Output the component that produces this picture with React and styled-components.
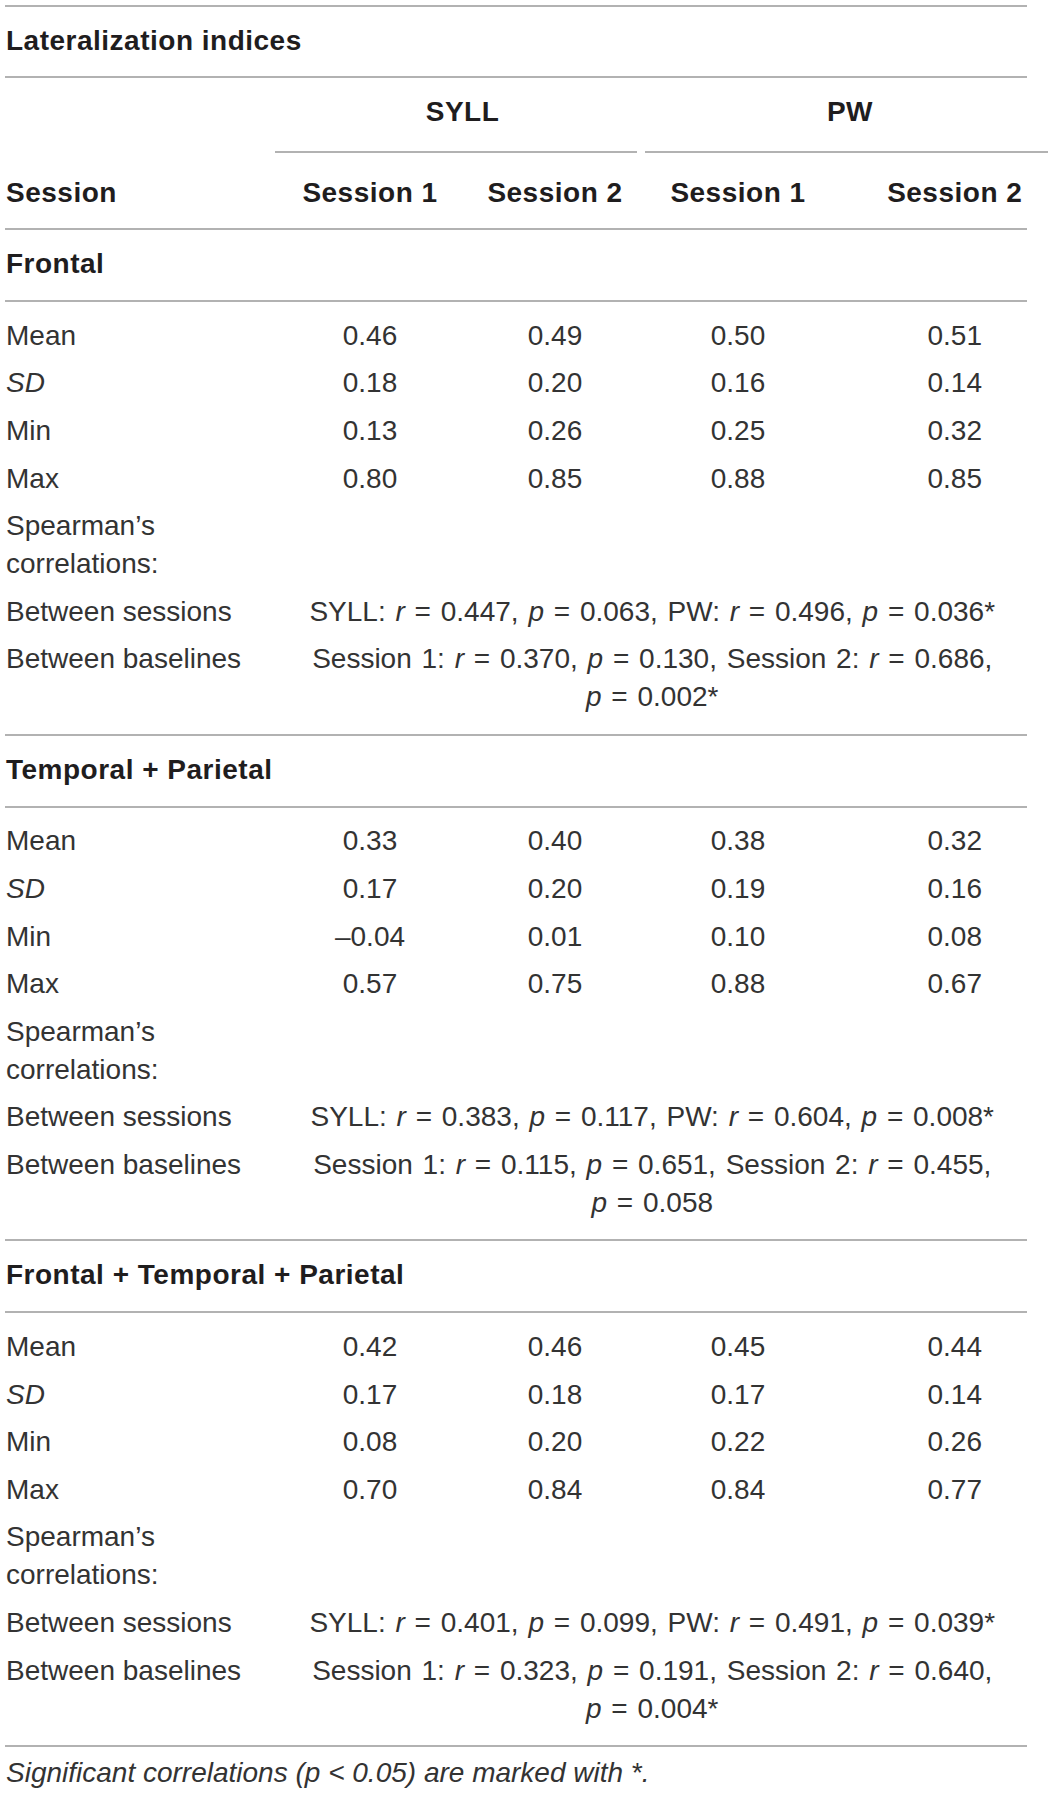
import React from 'react';
import styled, { createGlobalStyle } from 'styled-components';

const GlobalStyle = createGlobalStyle`
  html, body {
    margin: 0;
    padding: 0;
    background: #fff;
  }
  body {
    font-family: "Liberation Sans", Arial, sans-serif;
    font-size: 28px;
    line-height: 38px;
    color: #333;
  }
`;

const rule = '2px solid #b2b2b2';
const cols = '272.5px 185px 185px 181px 1fr';

const sections = [
  {
    name: 'Frontal',
    stats: [
      ['Mean', ['0.46', '0.49', '0.50', '0.51']],
      ['SD', ['0.18', '0.20', '0.16', '0.14'], true],
      ['Min', ['0.13', '0.26', '0.25', '0.32']],
      ['Max', ['0.80', '0.85', '0.88', '0.85']],
    ],
    sessions: ['0.447', '0.063', '0.496', '0.036*'],
    baselines: ['0.370', '0.130', '0.686', '0.002*'],
  },
  {
    name: 'Temporal + Parietal',
    stats: [
      ['Mean', ['0.33', '0.40', '0.38', '0.32']],
      ['SD', ['0.17', '0.20', '0.19', '0.16'], true],
      ['Min', ['–0.04', '0.01', '0.10', '0.08']],
      ['Max', ['0.57', '0.75', '0.88', '0.67']],
    ],
    sessions: ['0.383', '0.117', '0.604', '0.008*'],
    baselines: ['0.115', '0.651', '0.455', '0.058'],
  },
  {
    name: 'Frontal + Temporal + Parietal',
    stats: [
      ['Mean', ['0.42', '0.46', '0.45', '0.44']],
      ['SD', ['0.17', '0.18', '0.17', '0.14'], true],
      ['Min', ['0.08', '0.20', '0.22', '0.26']],
      ['Max', ['0.70', '0.84', '0.84', '0.77']],
    ],
    sessions: ['0.401', '0.099', '0.491', '0.039*'],
    baselines: ['0.323', '0.191', '0.640', '0.004*'],
  },
];

// one "r = x" / "p = x" pair, kept on a single line
function Stat({ sym, val }) {
  return (
    <Pair>
      <I>{sym}</I> = {val}
    </Pair>
  );
}

export default function App() {
  return (
    <>
      <GlobalStyle />
      <Page>
        <Table>
          <TitleRow>Lateralization indices</TitleRow>

          <GroupRow>
            <GroupHead $span='2 / 4' $inset='0 10.5px 0 -2.5px' $pad='13px'>
              SYLL
            </GroupHead>
            <GroupHead $span='4 / 6' $inset='0 -21px 0 -2.5px' $pad='7px'>
              PW
            </GroupHead>
          </GroupRow>

          <HeadRow>
            <Label>Session</Label>
            <Value>Session 1</Value>
            <Value>Session 2</Value>
            <Value>Session 1</Value>
            <Value>Session 2</Value>
          </HeadRow>

          {sections.map((s) => (
            <React.Fragment key={s.name}>
              <SectionRow>{s.name}</SectionRow>
              <Block>
                {s.stats.map(([label, vals, italic]) => (
                  <DataRow key={label}>
                    <Label $italic={italic}>{label}</Label>
                    {vals.map((v, i) => (
                      <Value key={i}>{v}</Value>
                    ))}
                  </DataRow>
                ))}
                <DataRow>
                  <Label>Spearman’s correlations:</Label>
                </DataRow>
                <DataRow>
                  <Label>Between sessions</Label>
                  <Wide>
                    SYLL: <Stat sym='r' val={s.sessions[0]} />, <Stat sym='p' val={s.sessions[1]} />, PW:{' '}
                    <Stat sym='r' val={s.sessions[2]} />, <Stat sym='p' val={s.sessions[3]} />
                  </Wide>
                </DataRow>
                <DataRow>
                  <Label>Between baselines</Label>
                  <Wide>
                    Session 1: <Stat sym='r' val={s.baselines[0]} />, <Stat sym='p' val={s.baselines[1]} />,
                    Session 2: <Stat sym='r' val={s.baselines[2]} />, <Stat sym='p' val={s.baselines[3]} />
                  </Wide>
                </DataRow>
              </Block>
            </React.Fragment>
          ))}

          <Footnote>
            Significant correlations (p &lt; 0.05) are marked with *.
          </Footnote>
        </Table>
      </Page>
    </>
  );
}

const Page = styled.div`
  width: 1060px;
  min-height: 1794px;
  padding: 5px 0 0 5px;
  box-sizing: border-box;
`;

const Table = styled.div`
  width: 1022px;
  border-top: ${rule};
`;

const TitleRow = styled.div`
  padding: 15px 0 16px 1px;
  border-bottom: ${rule};
  font-weight: 700;
  letter-spacing: 0.5px;
  color: #1f1d1e;
`;

const GroupRow = styled.div`
  display: grid;
  grid-template-columns: ${cols};
`;

const GroupHead = styled.div`
  grid-column: ${(p) => p.$span};
  margin: ${(p) => p.$inset};
  padding: 15px 0 20px ${(p) => p.$pad};
  border-bottom: ${rule};
  text-align: center;
  font-weight: 700;
  letter-spacing: 0.5px;
  color: #1f1d1e;
`;

const HeadRow = styled.div`
  display: grid;
  grid-template-columns: ${cols};
  padding: 21px 0 16px;
  border-bottom: ${rule};
  font-weight: 700;
  letter-spacing: 0.5px;
  color: #1f1d1e;

  & > :last-child {
    padding-left: 54px;
  }
`;

const SectionRow = styled.div`
  padding: 15px 0 17px 1px;
  border-bottom: ${rule};
  font-weight: 700;
  letter-spacing: 0.5px;
  color: #1f1d1e;
`;

const Block = styled.div`
  padding: 10px 0 12.5px;
  border-bottom: ${rule};
`;

const DataRow = styled.div`
  display: grid;
  grid-template-columns: ${cols};
  padding: 4.8px 0;

  & > :nth-child(5) {
    padding-left: 54px;
  }
`;

const Label = styled.div`
  padding-left: 1px;
  font-style: ${(p) => (p.$italic ? 'italic' : 'normal')};
`;

const Value = styled.div`
  text-align: center;
  white-space: nowrap;
`;

const Wide = styled.div`
  grid-column: 2 / 6;
  text-align: center;
  word-spacing: 2px;
`;

const Pair = styled.span`
  white-space: nowrap;
`;

const I = styled.i`
  font-style: italic;
`;

const Footnote = styled.div`
  padding: 7px 0 0 1px;
  font-style: italic;
`;
